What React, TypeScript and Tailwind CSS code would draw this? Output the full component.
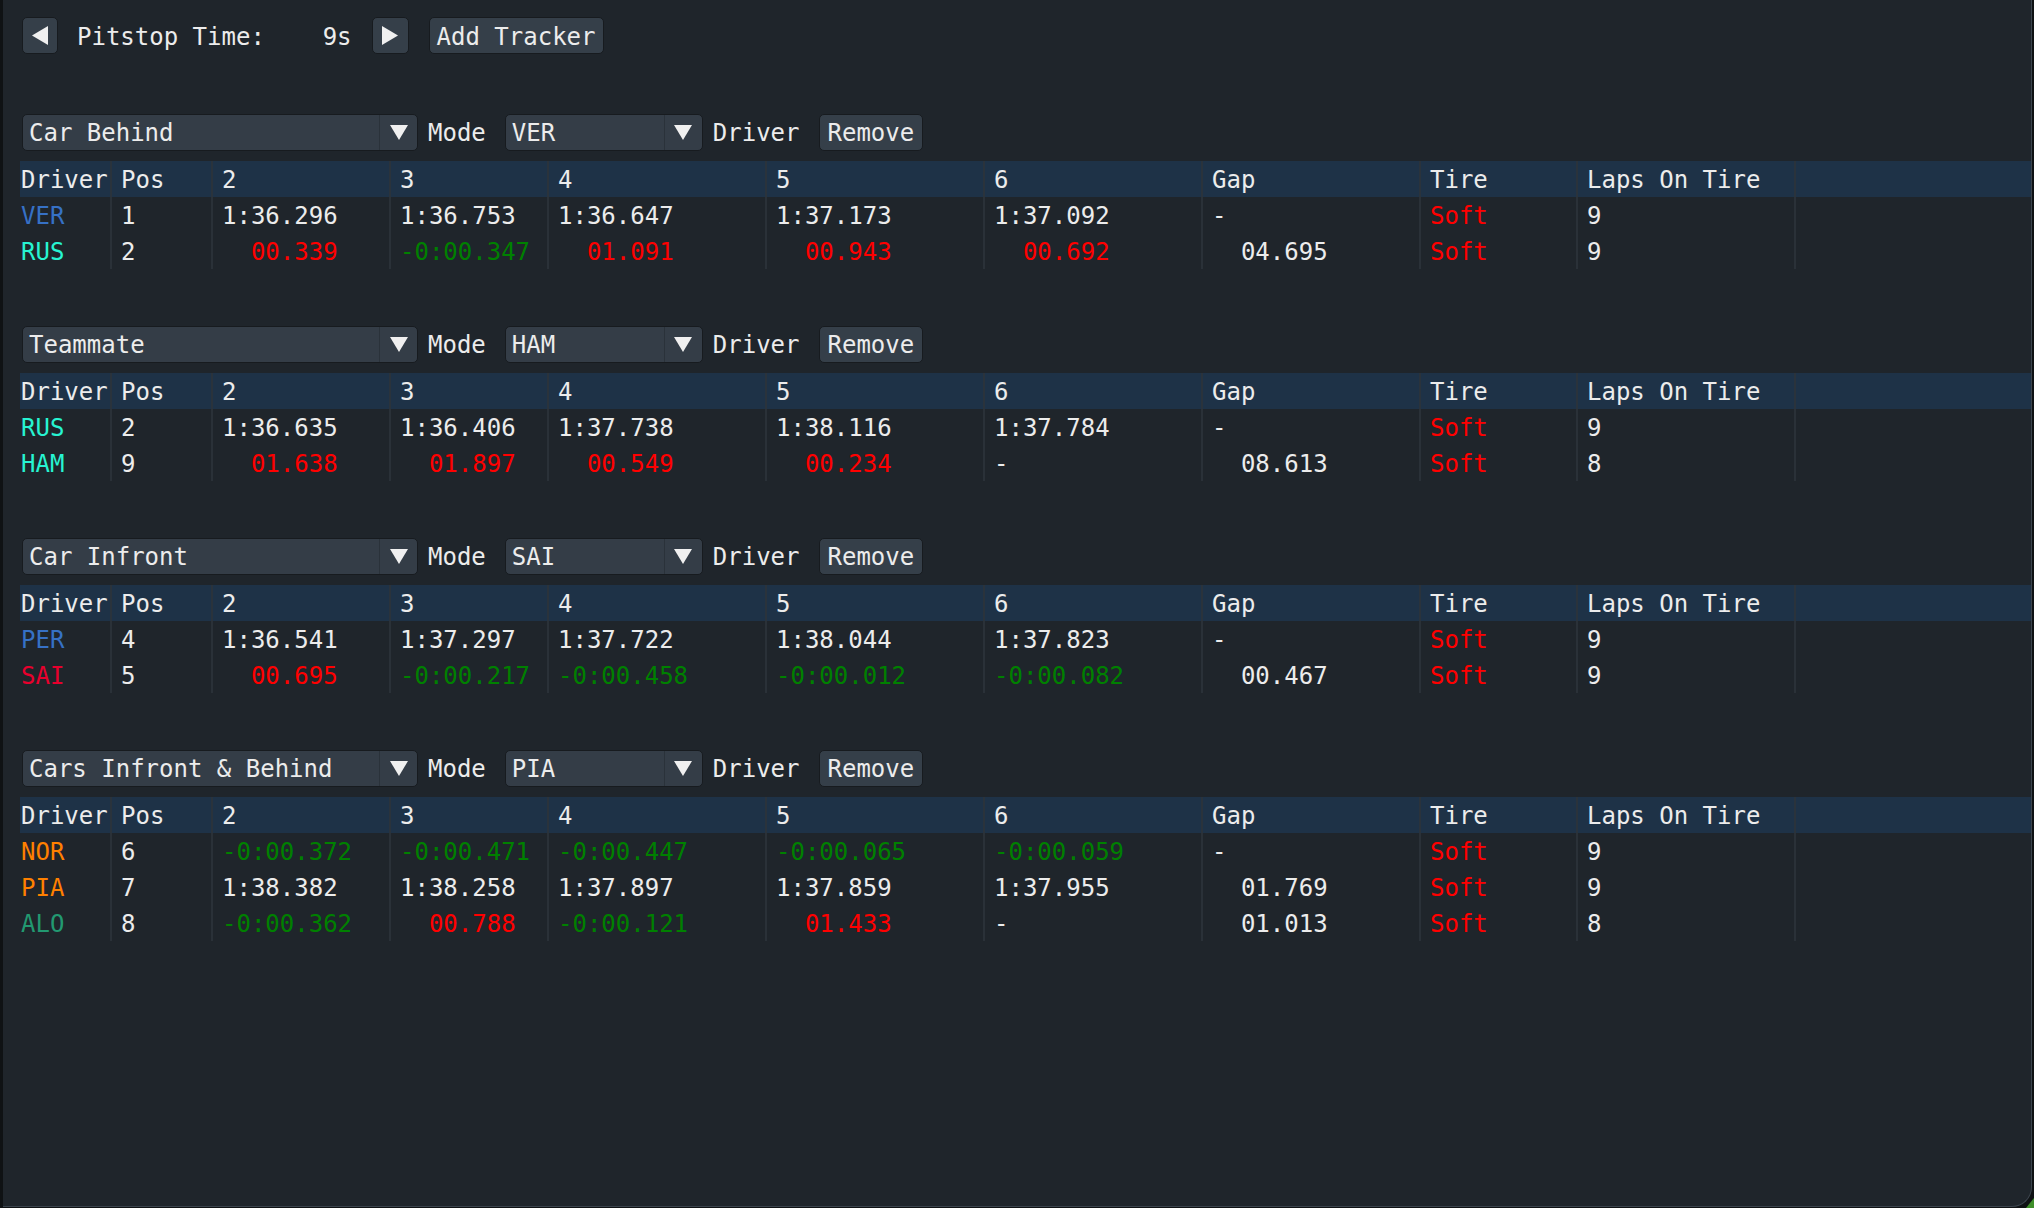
import React from "react";

type Section = {
  mode: string;
  driver: string;
  rows: string[][];
};

const driverColors: Record<string, string> = {
  VER: "text-[#3671c6]",
  PER: "text-[#3671c6]",
  RUS: "text-[#27f4d2]",
  HAM: "text-[#27f4d2]",
  SAI: "text-[#e8002d]",
  NOR: "text-[#ff8000]",
  PIA: "text-[#ff8000]",
  ALO: "text-[#229971]",
};

// driver, pos, lap 2..6, gap, tire, laps on tire
const sections: Section[] = [
  {
    mode: "Car Behind",
    driver: "VER",
    rows: [
      ["VER", "1", "1:36.296", "1:36.753", "1:36.647", "1:37.173", "1:37.092", "-", "Soft", "9"],
      ["RUS", "2", "  00.339", "-0:00.347", "  01.091", "  00.943", "  00.692", "  04.695", "Soft", "9"],
    ],
  },
  {
    mode: "Teammate",
    driver: "HAM",
    rows: [
      ["RUS", "2", "1:36.635", "1:36.406", "1:37.738", "1:38.116", "1:37.784", "-", "Soft", "9"],
      ["HAM", "9", "  01.638", "  01.897", "  00.549", "  00.234", "-", "  08.613", "Soft", "8"],
    ],
  },
  {
    mode: "Car Infront",
    driver: "SAI",
    rows: [
      ["PER", "4", "1:36.541", "1:37.297", "1:37.722", "1:38.044", "1:37.823", "-", "Soft", "9"],
      ["SAI", "5", "  00.695", "-0:00.217", "-0:00.458", "-0:00.012", "-0:00.082", "  00.467", "Soft", "9"],
    ],
  },
  {
    mode: "Cars Infront & Behind",
    driver: "PIA",
    rows: [
      ["NOR", "6", "-0:00.372", "-0:00.471", "-0:00.447", "-0:00.065", "-0:00.059", "-", "Soft", "9"],
      ["PIA", "7", "1:38.382", "1:38.258", "1:37.897", "1:37.859", "1:37.955", "  01.769", "Soft", "9"],
      ["ALO", "8", "-0:00.362", "  00.788", "-0:00.121", "  01.433", "-", "  01.013", "Soft", "8"],
    ],
  },
];

const headers = ["Driver", "Pos", "2", "3", "4", "5", "6", "Gap", "Tire", "Laps On Tire", ""];

const gridCols =
  "grid grid-cols-[90px_101px_178px_158px_218px_218px_218px_218px_157px_218px_1fr]";

function cellColor(col: number, value: string, driver: string) {
  if (col === 0) return driverColors[driver] ?? "text-[#ececec]";
  if (col >= 2 && col <= 6) {
    if (value.startsWith("-0")) return "text-[#008000]";
    if (value.startsWith(" ")) return "text-[#ff0000]";
  }
  if (col === 8) return "text-[#ff0000]";
  return "text-[#ececec]";
}

function Triangle({ dir }: { dir: "left" | "right" | "down" }) {
  if (dir === "down")
    return (
      <svg width="18" height="15" viewBox="0 0 18 15">
        <polygon points="0,0 18,0 9,15" fill="#f0f0f0" />
      </svg>
    );
  return (
    <svg width="16" height="19" viewBox="0 0 16 19">
      <polygon
        points={dir === "left" ? "16,0 16,19 0,9.5" : "0,0 0,19 16,9.5"}
        fill="#f0f0f0"
      />
    </svg>
  );
}

function Combo({ value, width }: { value: string; width: string }) {
  return (
    <div
      className={`flex h-[37px] ${width} rounded-[5px] border border-[#171b1f] bg-[#343d47]`}
    >
      <div className="flex flex-1 items-center pl-[6px] pt-[1px] whitespace-pre">{value}</div>
      <div className="flex w-[38px] items-center justify-center border-l border-[#2a323a]">
        <Triangle dir="down" />
      </div>
    </div>
  );
}

function Tracker({ section, first }: { section: Section; first: boolean }) {
  return (
    <div className={first ? "mt-[60px]" : "mt-[57px]"}>
      <div className="flex h-[37px] items-center">
        <Combo value={section.mode} width="w-[396px]" />
        <span className="ml-[10px] pt-[1px]">Mode</span>
        <div className="ml-[19px]">
          <Combo value={section.driver} width="w-[198px]" />
        </div>
        <span className="ml-[10px] pt-[1px]">Driver</span>
        <button className="ml-[19px] h-[37px] rounded-[5px] border border-[#171b1f] bg-[#353f49] px-[8px] pt-[1px] text-[#ececec]">
          Remove
        </button>
      </div>

      <div className="-ml-[2px] mt-[10px]">
        <div className={`${gridCols} h-[36px] bg-[#1e3247]`}>
          {headers.map((h, i) => (
            <div
              key={i}
              className={`flex items-center pt-[1px] whitespace-pre ${
                i === 0 ? "pl-[1px]" : "border-l-2 border-[#2a333c] pl-[9px]"
              }`}
            >
              {h}
            </div>
          ))}
        </div>
        {section.rows.map((row) => (
          <div key={row[0]} className={`${gridCols} h-[36px]`}>
            {[...row, ""].map((v, i) => (
              <div
                key={i}
                className={`flex items-center pt-[1px] whitespace-pre ${cellColor(i, v, row[0])} ${
                  i === 0 ? "pl-[1px]" : "border-l-2 border-[#2a3138] pl-[9px]"
                }`}
              >
                {v}
              </div>
            ))}
          </div>
        ))}
      </div>
    </div>
  );
}

export default function App() {
  return (
    <div className="relative h-[1208px] w-[2034px] overflow-hidden bg-[#0f1214] font-['DejaVu_Sans_Mono',monospace] text-[24px] leading-none text-[#ececec]">
      <div className="ml-[3px] h-[1207px] w-[2029px] rounded-br-[20px] border-r border-b border-[#3b444d] bg-[#1f252b] pl-[19px] pt-[17px]">
        {/* top controls */}
        <div className="flex h-[37px] items-center">
          <button className="flex h-[37px] w-[36px] items-center justify-center rounded-[5px] border border-[#171b1f] bg-[#353f49]">
            <Triangle dir="left" />
          </button>
          <span className="ml-[19px] pt-[2px] whitespace-pre">{"Pitstop Time:    9s"}</span>
          <button className="ml-[20px] flex h-[37px] w-[37px] items-center justify-center rounded-[5px] border border-[#171b1f] bg-[#353f49]">
            <Triangle dir="right" />
          </button>
          <button className="ml-[20px] h-[37px] rounded-[5px] border border-[#171b1f] bg-[#353f49] px-[7px] pt-[2px] text-[#ececec]">
            Add Tracker
          </button>
        </div>

        {sections.map((s, i) => (
          <Tracker key={s.mode} section={s} first={i === 0} />
        ))}
      </div>

      {/* resize grip */}
      <svg className="absolute bottom-0 right-0" width="8" height="10" viewBox="0 0 8 10">
        <polygon points="8,0 8,10 0,10" fill="#3f8f2a" />
      </svg>
    </div>
  );
}
